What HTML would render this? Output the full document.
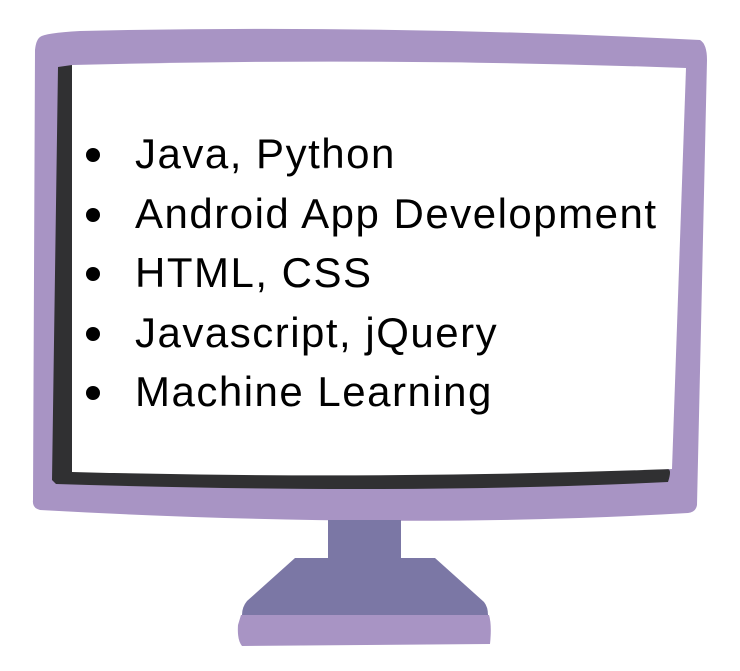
<!DOCTYPE html>
<html><head><style>
html,body{margin:0;padding:0;background:#fff;width:740px;height:671px;overflow:hidden}
svg{position:absolute;left:0;top:0}
ul{position:absolute;left:0;top:124px;margin:0;padding:0;list-style:none;font-family:"Liberation Sans",sans-serif;font-size:42px;color:#000}
li{position:relative;height:59.5px;line-height:59.5px;padding-left:135px;letter-spacing:1.5px;white-space:nowrap}
li:before{content:"";position:absolute;left:86px;top:24px;width:14px;height:14px;border-radius:50%;background:#000}
</style></head><body>
<svg width="740" height="671" viewBox="0 0 740 671">
<path d="M40 37 Q45 33 80 31 Q380 24 700 40 Q707 44 707 60 L697 505 Q696 512 688 513 Q400 530 40 510 Q32 508 33 500 L35 50 Q36 40 40 37 Z" fill="#a894c4"/>
<path d="M58 67 L72 65 L72 470 Q300 478 668 469 Q672 470 668 482 Q400 495 56 484 L52 480 Z" fill="#303032"/>
<path d="M72 65 Q380 57 686 68 L672 469 Q380 480 72 472 Z" fill="#fff"/>
<rect x="328" y="520" width="73" height="38" fill="#7b77a5"/>
<path d="M295 558 L435 558 L484 602 Q488 607 488 615 L242 615 Q242 607 247 601 Z" fill="#7b77a5"/>
<path d="M241 615 L489 615 Q492 625 490 644 L242 646 Q237 640 238 625 Z" fill="#a894c4"/>
</svg>
<ul>
<li>Java, Python</li>
<li>Android App Development</li>
<li>HTML, CSS</li>
<li>Javascript, jQuery</li>
<li>Machine Learning</li>
</ul>
</body></html>
